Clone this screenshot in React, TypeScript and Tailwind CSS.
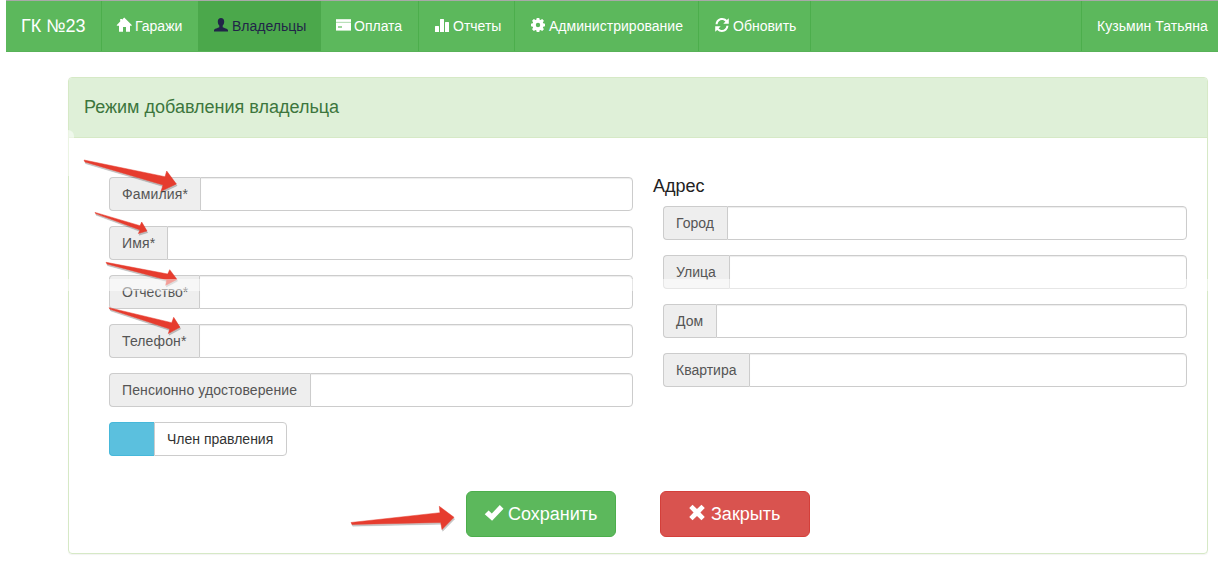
import type { ReactNode } from "react";

const icons: Record<string, ReactNode> = {
  home: (
    <path d="M7.2 -.6 15 7.2 14.4 7.8 13 7.8 13 13.8 9 13.8 9 9 6 9 6 13.8 2 13.8 2 7.8 .2 7.8 -.4 7.2 3.2 3.6V.9H5V1.8Z" />
  ),
  user: (
    <path d="M7 0C9 0 10.2 1.4 10.2 3.4 10.2 5.2 9.6 6.6 8.7 7.6V9.2C10 10 14 10.6 14 12.2V13.6H0V12.2C0 10.6 4 10 5.3 9.2V7.6C4.4 6.6 3.8 5.2 3.8 3.4 3.8 1.4 5 0 7 0Z" />
  ),
  card: (
    <>
      <path d="M0 1.2H15V12.6H0Z" />
      <path d="M0 3.8H15V5H0Z" className="fill-[#b9e0b9]" />
      <path d="M2 8.4H6V9.6H2Z" className="fill-[#5cb85c]" />
    </>
  ),
  stats: <path d="M0 8.6Q0 8 .6 8H3.4Q4 8 4 8.6V14H0ZM5 1.6Q5 1 5.6 1H8.4Q9 1 9 1.6V14H5ZM10 4.6Q10 4 10.6 4H13.4Q14 4 14 4.6V14H10Z" />,
  cog: (
    <path
      fillRule="evenodd"
      d="M5.7 0H8.3L8.7 1.8 9.5 2.1 11.2 1.1 12.9 2.8 11.9 4.5 12.2 5.3 14 5.7V8.3L12.2 8.7 11.9 9.5 12.9 11.2 11.2 12.9 9.5 11.9 8.7 12.2 8.3 14H5.7L5.3 12.2 4.5 11.9 2.8 12.9 1.1 11.2 2.1 9.5 1.8 8.7 0 8.3V5.7L1.8 5.3 2.1 4.5 1.1 2.8 2.8 1.1 4.5 2.1 5.3 1.8ZM7 4.8A2.2 2.2 0 1 0 7 9.2 2.2 2.2 0 1 0 7 4.8Z"
    />
  ),
  refresh: (
    <path d="M.6 6.3C.8 2.6 3.5 .1 7.1 .1 9 .1 10.6 .8 11.8 2L13.8.2V5.7H8.3L10.4 3.6C9.5 2.7 8.4 2.1 7 2.1 4.7 2.1 2.8 3.9 2.6 6.3ZM13.4 7.7C13.2 11.4 10.5 13.9 6.9 13.9 5 13.9 3.4 13.2 2.2 12L.2 13.8V8.3H5.7L3.6 10.4C4.5 11.3 5.6 11.9 7 11.9 9.3 11.9 11.2 10.1 11.4 7.7Z" />
  ),
  ok: <path d="M-.2 8 2.8 5.1 5.3 7.4 11.5 .8 14.4 3.6 5.5 13Z" />,
  remove: <path d="M3.1 .2 7 4 10.9 .2 13.8 3.1 10 7 13.8 10.9 10.9 13.8 7 10 3.1 13.8 .2 10.9 4 7 .2 3.1Z" />,
};

function Icon({ name, className }: { name: string; className: string }) {
  return (
    <svg viewBox="0 0 14 14" fill="currentColor" overflow="visible" className={`shrink-0 ${className}`}>
      {icons[name]}
    </svg>
  );
}

const navItems = [
  { icon: "home", label: "Гаражи", width: "w-24 pl-[15px]" },
  { icon: "user", label: "Владельцы", width: "w-[123px] pl-4", active: true },
  { icon: "card", label: "Оплата", width: "w-[98px] pl-[15px] border-r" },
  { icon: "stats", label: "Отчеты", width: "w-24 pl-4 border-r" },
  { icon: "cog", label: "Администрирование", width: "w-[184px] pl-4 border-r tracking-[0.03px]" },
  { icon: "refresh", label: "Обновить", width: "w-28 pl-4 border-r" },
];

function NavBar() {
  return (
    <nav className="mx-1.5 flex h-[52px] border-b border-t border-b-[#58b258] border-t-[#a9a9a9] bg-[#5cb85c] text-white">
      <div className="flex w-24 items-center border-r border-[#4cae4c] pl-[15px] text-[18px]">ГК №23</div>
      {navItems.map((item) => (
        <a
          key={item.label}
          className={`flex items-center gap-1 border-[#4cae4c] ${item.width} ${
            item.active ? "bg-[#4ba84b] text-[#212548]" : ""
          }`}
        >
          <Icon name={item.icon} className="size-3.5 -translate-y-px" />
          {item.label}
        </a>
      ))}
      <div className="ml-auto flex w-[137px] items-center border-l border-[#4cae4c] pl-[15px] tracking-[0.04px]">
        Кузьмин Татьяна
      </div>
    </nav>
  );
}

function Field({ label, width }: { label: string; width: string }) {
  return (
    <label className="flex h-[34px] w-[524px]">
      <span
        className={`flex shrink-0 items-center whitespace-nowrap rounded-l border border-r-0 border-[#ccc] bg-[#eee] pl-3 text-[#555] ${width}`}
      >
        {label}
      </span>
      <input className="min-w-0 flex-1 rounded-r border border-[#ccc] bg-white px-3 shadow-[inset_0_1px_1px_rgba(0,0,0,0.075)] outline-none" />
    </label>
  );
}

const arrows = [
  "84,160 165,176.7 166.7,171 176.4,184 161,191.3 163,185 85,162",
  "95,212.4 140,225.7 141.7,222 147,231 138.3,233.6 140,230 95.6,213.6",
  "106,262.3 167.7,274 169.7,269.7 177,279.4 165.7,285.3 166.7,280 107,264",
  "109,307.7 171.7,322.7 173.7,317.3 180,327.3 168.3,333.6 169.7,329 110,309.3",
  "351,522.5 440,512.7 439.3,506.3 454,517.3 442,529.6 440.7,522.5 352,524.5",
];

export default function App() {
  return (
    <div className="relative h-[570px] w-[1224px] overflow-hidden bg-white font-['Liberation_Sans',Arial,sans-serif] text-[14px] leading-5 text-[#333]">
      <NavBar />
      <main className="ml-[68px] mt-[25px] h-[477px] w-[1140px] rounded border border-[#d6e9c6] shadow-[0_1px_1px_rgba(0,0,0,0.05)]">
        <header className="flex h-[60px] items-center rounded-t-[3px] border-b border-[#d6e9c6] bg-[#dff0d8] pb-0.5 pl-[15px] text-[18px] text-[#3c763d]">
          <h3>Режим добавления владельца</h3>
        </header>
        <div className="flex gap-5 pl-10 pt-[39px]">
          <div className="flex flex-col gap-[15px]">
            <Field label="Фамилия*" width="w-[91px] tracking-[0.15px]" />
            <Field label="Имя*" width="w-[58px] tracking-[0.2px]" />
            <Field label="Отчество*" width="w-[90px]" />
            <Field label="Телефон*" width="w-[90px] tracking-[0.12px]" />
            <Field label="Пенсионно удостоверение" width="w-[201px] tracking-[0.1px]" />
            <div className="flex h-[34px]">
              <button className="w-[45px] rounded-l border border-r-0 border-[#46b8da] bg-[#5bc0de]" />
              <button className="w-[133px] rounded-r border border-[#ccc] bg-white pl-3 text-left">Член правления</button>
            </div>
          </div>
          <section>
            <h4 className="h-[29px] text-[18px] leading-[18px] text-[#222]">Адрес</h4>
            <div className="flex flex-col gap-[15px] pl-2.5">
              <Field label="Город" width="w-16" />
              <Field label="Улица" width="w-[66px]" />
              <Field label="Дом" width="w-[53px]" />
              <Field label="Квартира" width="w-[86px]" />
            </div>
          </section>
        </div>
        <div className="ml-[397px] mt-[35px] flex gap-11 text-[18px] text-white">
          <button className="flex h-[46px] w-[150px] items-center gap-[5px] rounded-md border border-[#4cae4c] bg-[#5cb85c] pl-[18px]">
            <Icon name="ok" className="size-[18px] -translate-y-px" />
            Сохранить
          </button>
          <button className="flex h-[46px] w-[150px] items-center gap-[6px] rounded-md border border-[#d43f3a] bg-[#d9534f] pl-7">
            <Icon name="remove" className="size-[16px] -translate-y-[1.5px]" />
            Закрыть
          </button>
        </div>
      </main>
      <svg viewBox="0 0 1224 570" className="pointer-events-none absolute inset-0 h-[570px] w-[1224px]">
        {arrows.map((points) => (
          <g key={points} strokeLinejoin="round">
            <polygon points={points} transform="translate(.7 1.7)" className="fill-black/20 stroke-black/10" />
            <polygon points={points} className="fill-[#e63c2e] stroke-[#e63c2e] stroke-[0.5]" />
          </g>
        ))}
      </svg>
      <div className="pointer-events-none absolute left-[68px] top-[279px] h-3 w-[1141px] bg-white/50" />
      <div className="pointer-events-none absolute left-[68px] top-[130px] h-[46px] w-1.5 rounded-tr-md bg-white/50" />
    </div>
  );
}
